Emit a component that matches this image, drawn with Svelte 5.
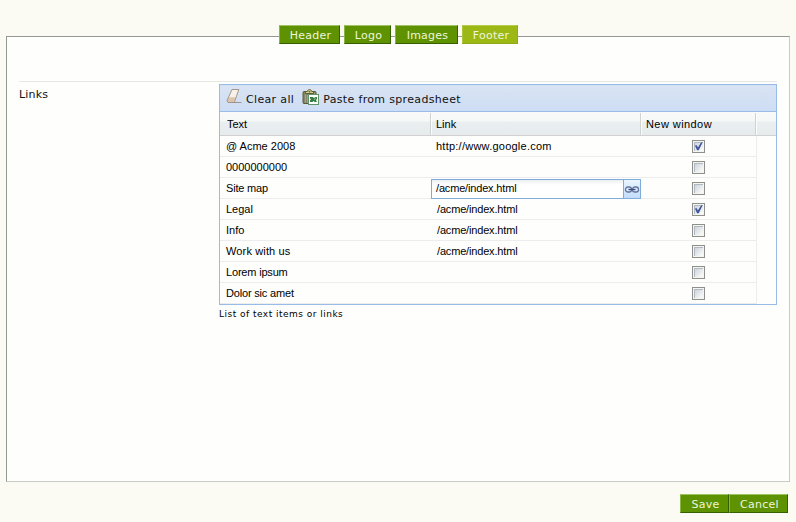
<script>
  const tabs = [
    { label: 'Header', width: 61 },
    { label: 'Logo', width: 47 },
    { label: 'Images', width: 63 },
    { label: 'Footer', width: 56 },
  ];
  let active = $state('Footer');
  let rows = $state([
    { text: '@ Acme 2008', link: 'http://www.google.com', open: true, wide: true },
    { text: '0000000000', link: '', open: false },
    { text: 'Site map', link: '/acme/index.html', open: false, editing: true, tight: true },
    { text: 'Legal', link: '/acme/index.html', open: true },
    { text: 'Info', link: '/acme/index.html', open: false },
    { text: 'Work with us', link: '/acme/index.html', open: false, loose: true },
    { text: 'Lorem ipsum', link: '', open: false, tight: true },
    { text: 'Dolor sic amet', link: '', open: false, tight: true },
  ]);
</script>

<div class="page">
  <nav class="tabs">
    {#each tabs as tab}
      <button class="btn" class:active={active === tab.label} style="width:{tab.width}px" onclick={() => (active = tab.label)}>{tab.label}</button>
    {/each}
  </nav>
  <main class="panel">
    <div class="field">
      <div class="label">Links</div>
      <div class="control">
        <div class="grid">
          <div class="toolbar">
            <svg class="eraser" width="16" height="16" viewBox="0 0 16 16">
              <path d="M6 .5h6.8L8.3 13.5H2L1 11.5z" fill="#f8f1e8" />
              <path d="M3.1 8.2h6.4l-1.4 5.3H2L1 11.8z" fill="#dcc4b0" />
              <path d="M6 .5h6.8L8.3 13.5H2L1 11.5L6 .5" fill="none" stroke="#a3958b" />
              <path d="M8 13.5h7.5" stroke="#a3958b" />
            </svg>
            <span class="clear">Clear all</span>
            <svg class="paste" width="17" height="17" viewBox="0 0 17 17">
              <rect x="1" y="2.5" width="13" height="12" rx="1" fill="#85866a" stroke="#56583f" />
              <path d="M3.5 5.5v8M5.5 6v8M10.5 4v3M12.5 4v3" stroke="#a3a283" />
              <path d="M3.5 4.5h8V2.5H9.7C9.7 .1 5.3 .1 5.3 2.5H3.5z" fill="#d6d58c" stroke="#5c5b34" />
              <rect x="6.7" y="2" width="1.6" height="1.5" fill="#686538" />
              <rect x="6.5" y="5.5" width="10" height="10" fill="#fff" stroke="#62916a" />
              <path d="M8 8h3l1 1.2L13 8h2v2l-1.1 1L15 13h-2.4l-1-1.1L10.5 13H8v-2l1.2-.6L8 9.6z" fill="#327c40" />
              <path d="M12 11l2-2.5" stroke="#9fd099" stroke-width=".8" />
            </svg>
            <span class="pastetext">Paste from spreadsheet</span>
          </div>
          <div class="head">
            <div class="h1">Text</div>
            <div class="h2">Link</div>
            <div class="h3">New window</div>
          </div>
          {#each rows as row}
            <div class="row">
              <div class="c1" class:tight={row.tight} class:loose={row.loose}>{row.text}</div>
              <div class="c2" class:wide={row.wide}>
                {#if row.editing}
                  <div class="editor">
                    <span>{row.link}</span>
                    <div class="trigger">
                      <svg width="16" height="9" viewBox="0 0 16 9" fill="none">
                        <rect x="1.5" y="2" width="6" height="5" rx="2.3" stroke="#65759c" stroke-width="1.3" />
                        <rect x="8.5" y="2" width="6" height="5" rx="2.3" stroke="#65759c" stroke-width="1.3" />
                        <path d="M4.5 4.5h7" stroke="#3e4d77" stroke-width="1.3" />
                      </svg>
                    </div>
                  </div>
                {:else}{row.link}{/if}
              </div>
              <div class="c3">
                <button class="check" aria-label="New window" onclick={() => (row.open = !row.open)}>
                  {#if row.open}
                    <svg width="9" height="9" viewBox="0 0 9 9"><path d="M.9 3.6l1.9-.4 1.1 2.2L7 .4l1.7-.2L4.7 8.2H3.1z" fill="#3f569e" /></svg>
                  {/if}
                </button>
              </div>
            </div>
          {/each}
        </div>
        <div class="help">List of text items or links</div>
      </div>
    </div>
  </main>
  <footer>
    <button class="btn" style="width:49px">Save</button>
    <button class="btn" style="width:59px">Cancel</button>
  </footer>
</div>

<style>
  :global(body) { background: #fbfbf3; }
  * { box-sizing: border-box; }
  .page {
    width: 796px; height: 522px; padding: 25px 6px 0;
    display: flex; flex-direction: column;
    font: 11px 'DejaVu Sans', sans-serif; color: #111; white-space: nowrap;
  }
  .tabs { display: flex; gap: 4px; padding-left: 273px; height: 19px; margin-bottom: -8px; position: relative; z-index: 1; }
  .btn {
    height: 19px; padding: 2px 0 0 2px; font: inherit; line-height: 15px; color: #eff5df;
    background: #5e9200; border: 1px solid; border-color: #a0c364 #356000 #356000 #8bb547; letter-spacing: .25px;
  }
  .btn.active { background: #9cb814; border-color: #b7cc4b #91a918 #91a918 #acc53b; }
  .panel {
    width: 784px; height: 446px; padding: 44px 12px 0; background: #fefefd;
    border: 1px solid; border-color: #949991 #c9ccc6 #c9ccc6 #949991;
  }
  .field { width: 758px; border-top: 1px solid #e4e7e2; display: flex; }
  .label { width: 200px; padding-top: 6px; line-height: 13px; letter-spacing: .2px; }
  .control { width: 558px; padding-top: 2px; }
  .grid { border: 1px solid #99bbe8; height: 221px; font-family: 'Liberation Sans', sans-serif; color: #000; }
  .toolbar {
    height: 27px; display: flex; align-items: center; border-bottom: 1px solid #99bbe8;
    background: linear-gradient(#d9e4f3, #cdddf4); border-top: 1px solid #d4e1f4;
    font-family: 'DejaVu Sans', sans-serif; color: #111;
  }
  .eraser { margin: -3px 0 0 6px; }
  .clear { margin-left: 4px; padding-top: 2px; letter-spacing: .34px; }
  .paste { margin: -3px 0 0 8px; }
  .pastetext { margin-left: 4px; padding-top: 2px; letter-spacing: .34px; }
  .head {
    display: flex; height: 24px; line-height: 23px; border-bottom: 1px solid #d0d0d0; padding: 1px 0 0 1px;
    background: linear-gradient(#f8f9f8 0 2px, #f5f8f7 9px, #e9eff1 10px, #e6ecee);
  }
  .head > div { border-right: 1px solid #cfd2d1; padding-left: 5px; box-shadow: 1px 0 #fbfcfb; }
  .head .h1 { width: 210px; padding-left: 6px; }
  .h2 { width: 210px; }
  .h3 { width: 115px; letter-spacing: .43px; }
  .row { width: 537px; height: 21px; display: flex; border: solid #ededed; border-width: 0 1px 1px 0; line-height: 21px; }
  .c1 { width: 211px; padding-left: 6px; }
  .c1.tight { letter-spacing: -.18px; }
  .c1.loose { letter-spacing: .14px; }
  .c2 { width: 210px; padding-left: 6px; letter-spacing: -.17px; }
  .c2.wide { padding-left: 5px; letter-spacing: .24px; }
  .c3 { width: 115px; display: flex; justify-content: center; padding: 4px 0 0 0; }
  .check {
    width: 13px; height: 13px; padding: 1px; border: 1px solid #8e908c; display: flex;
    background: linear-gradient(135deg, #c8cfd6, #f6f7f6 85%) content-box, #f1f2ef;
    box-shadow: inset 0 0 0 1px #f4f4f1, inset 2px 2px #b2b9c3;
  }
  .check svg { flex: none; }
  .editor {
    width: 210px; height: 20px; margin: 1px 0 0 -6px; border: 1px solid #7eadd9; display: flex;
    justify-content: space-between; background: linear-gradient(#edf0f0, #fff 5px); padding-left: 4px; line-height: 17px;
  }
  .trigger { width: 17px; border-left: 1px solid #7eadd9; background: linear-gradient(#eaf6ff, #c4dcfa); display: flex; align-items: center; justify-content: center; }
  .trigger svg { flex: none; }
  .help { font-size: 9px; line-height: 12px; margin-top: 3px; letter-spacing: .48px; color: #000; }
  footer { display: flex; justify-content: flex-end; margin-top: 12px; padding-right: 2px; }
</style>
